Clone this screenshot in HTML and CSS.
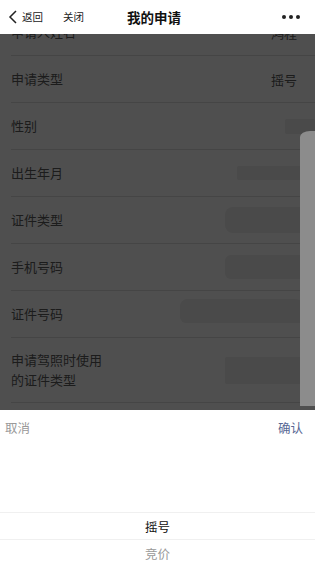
FILE: index.html
```html
<!DOCTYPE html>
<html lang="zh">
<head>
<meta charset="utf-8">
<title>我的申请</title>
<link rel="stylesheet" href="styles.css">
</head>
<body>
<div class="page">
  <header class="header">
    <div class="nav-left">
      <span class="back">
        <svg class="chev" width="10" height="14" viewBox="0 0 10 14"><path d="M8 1 L2 7 L8 13" fill="none" stroke="#222" stroke-width="1.5"/></svg>
        <span class="nav-text">返回</span>
      </span>
      <span class="nav-text">关闭</span>
    </div>
    <div class="title">我的申请</div>
    <div class="nav-right">
      <div class="more"><i></i><i></i><i></i></div>
    </div>
  </header>

  <div class="viewport">
    <main class="list">
      <div class="row"><span class="label">申请人姓名</span><span class="value">鸿程</span></div>
      <div class="row"><span class="label">申请类型</span><span class="value">摇号</span></div>
      <div class="row"><span class="label">性别</span><span class="mosaic m-sex"></span></div>
      <div class="row"><span class="label">出生年月</span><span class="mosaic m-birth"></span></div>
      <div class="row"><span class="label">证件类型</span><span class="mosaic m-idtype"></span></div>
      <div class="row"><span class="label">手机号码</span><span class="mosaic m-phone"></span></div>
      <div class="row"><span class="label">证件号码</span><span class="mosaic m-idno"></span></div>
      <div class="row tall"><span class="label">申请驾照时使用<br>的证件类型</span><span class="mosaic m-lic"></span></div>
    </main>
    <div class="mask"></div>
    <div class="side-curl"></div>
  </div>

  <section class="sheet">
    <div class="toolbar">
      <span class="cancel">取消</span>
      <span class="confirm">确认</span>
    </div>
    <div class="picker">
      <div class="opt selected">摇号</div>
      <div class="opt">竞价</div>
    </div>
  </section>
</div>
</body>
</html>
```
FILE: styles.css
```css
* { box-sizing: border-box; }
html, body { margin: 0; padding: 0; }
body {
  font-family: "Noto Sans CJK SC", "Noto Sans", sans-serif;
  background: #fff;
  color: #333;
}
.page {
  width: 315px;
  height: 571px;
  overflow: hidden;
  display: flex;
  flex-direction: column;
}
.header {
  flex: none;
  height: 34px;
  background: #fff;
  display: grid;
  grid-template-columns: 1fr auto 1fr;
  align-items: center;
  padding: 0 15px 0 8px;
}
.nav-left {
  display: flex;
  align-items: center;
  gap: 20px;
}
.back { display: flex; align-items: center; gap: 4px; }
.chev { display: block; }
.nav-text { font-size: 10.5px; color: #222; line-height: 1; }
.title {
  text-align: center;
  font-size: 13.5px;
  font-weight: 700;
  color: #111;
  line-height: 34px;
}
.nav-right { display: flex; justify-content: flex-end; }
.more { display: flex; gap: 3px; align-items: center; }
.more i {
  display: block;
  width: 4px; height: 4px;
  border-radius: 50%;
  background: #222;
}

.viewport {
  position: relative;
  flex: none;
  height: 376px;
  overflow: hidden;
}
.list {
  margin-top: -25px;
}
.row {
  height: 47px;
  margin-left: 11px;
  border-bottom: 1px solid #ddd;
  display: flex;
  align-items: center;
  justify-content: space-between;
  padding-right: 18px;
  font-size: 13px;
  color: #5a5a5a;
}
.row.tall { height: 65px; }
.label { line-height: 20px; }
.value { color: #5a5a5a; }
.mosaic {
  display: block;
  background: #ededed;
  margin-right: -18px;
  border-radius: 2px;
}
.m-sex { width: 30px; height: 15px; }
.m-birth { width: 78px; height: 14px; }
.m-idtype { width: 90px; height: 26px; border-radius: 8px 2px 2px 8px; }
.m-phone { width: 90px; height: 24px; border-radius: 6px 2px 2px 6px; }
.m-idno { width: 135px; height: 24px; border-radius: 14px 40px 6px 12px; margin-top: -6px; }
.m-lic { width: 90px; height: 27px; }

.mask {
  position: absolute;
  inset: 0;
  background: rgba(0, 0, 0, 0.69);
}
.side-curl {
  position: absolute;
  top: 97px;
  right: 0;
  width: 15px;
  height: 275px;
  background: #8c8c8c;
  border-top-left-radius: 10px 6px;
}

.sheet {
  flex: none;
  height: 161px;
  background: #fff;
}
.toolbar {
  height: 34px;
  display: flex;
  justify-content: space-between;
  align-items: center;
  padding: 0 12px 0 5px;
  font-size: 12.5px;
}
.cancel { color: #999; }
.confirm { color: #586894; }
.picker {
  padding-top: 68px;
}
.opt {
  height: 27px;
  line-height: 27px;
  text-align: center;
  font-size: 12.5px;
  color: #999;
}
.opt.selected {
  color: #111;
  border-top: 1px solid #f0f0f0;
  border-bottom: 1px solid #f0f0f0;
  height: 28px;
}
```
